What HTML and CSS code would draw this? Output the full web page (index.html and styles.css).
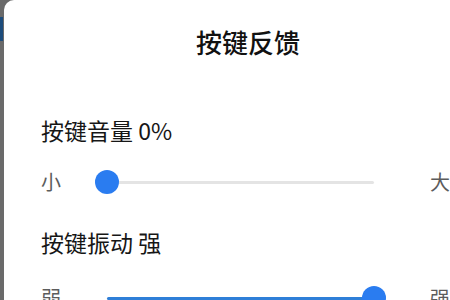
FILE: index.html
```html
<!DOCTYPE html>
<html lang="zh-CN">
<head>
<meta charset="utf-8">
<title>按键反馈</title>
<link rel="stylesheet" href="styles.css">
</head>
<body>
<div class="screen">
  <div class="backdrop"><div class="backdrop-blob"></div></div>
  <div class="dialog">
    <div class="title">按键反馈</div>
    <div class="heading heading-first">按键音量 0%</div>
    <div class="slider-row slider-row-first">
      <span class="side">小</span>
      <div class="slider">
        <div class="track"><div class="fill" style="width:0%"></div></div>
        <div class="thumb" style="left:0%"></div>
      </div>
      <span class="side side-right">大</span>
    </div>
    <div class="heading heading-second">按键振动 强</div>
    <div class="slider-row slider-row-second">
      <span class="side">弱</span>
      <div class="slider">
        <div class="track"><div class="fill" style="width:100%"></div></div>
        <div class="thumb" style="left:100%"></div>
      </div>
      <span class="side side-right">强</span>
    </div>
  </div>
</div>
</body>
</html>
```

FILE: styles.css
```css
html, body {
  margin: 0;
  padding: 0;
  width: 450px;
  height: 300px;
  overflow: hidden;
  background: #6a6a6a;
}
.screen {
  display: flex;
  width: 450px;
  height: 300px;
  overflow: hidden;
  font-family: "Noto Sans CJK SC", "Noto Sans", sans-serif;
}
.backdrop {
  position: relative;
  flex: 0 0 4px;
  background: #6a6a6a;
}
.backdrop-blob {
  position: absolute;
  left: 0;
  top: 17px;
  width: 3px;
  height: 24px;
  background: #1d4c7c;
}
.dialog {
  flex: 0 0 488px;
  box-sizing: border-box;
  background: #ffffff;
  border-top-left-radius: 10px;
  padding: 0 37px;
}
.title {
  padding-top: 29px;
  font-size: 26px;
  line-height: 26px;
  font-weight: 500;
  color: #111111;
  text-align: center;
}
.heading {
  font-size: 23px;
  line-height: 23px;
  color: #161616;
}
.heading-first { margin-top: 64px; }
.heading-second { margin-top: 37px; }
.slider-row {
  display: flex;
  align-items: center;
  height: 24px;
}
.slider-row-first { margin-top: 28px; }
.slider-row-second { margin-top: 32px; }
.side {
  flex: 0 0 20px;
  font-size: 20px;
  line-height: 20px;
  color: #5c5c5c;
}
.side-right { margin-left: 56px; }
.slider {
  position: relative;
  flex: 0 0 267px;
  margin-left: 46px;
  height: 24px;
  display: flex;
  align-items: center;
}
.track {
  width: 100%;
  height: 3px;
  background: #e4e4e4;
  border-radius: 2px;
}
.fill {
  height: 100%;
  background: #2f7fd8;
  border-radius: 2px;
}
.thumb {
  position: absolute;
  top: 0;
  width: 24px;
  height: 24px;
  margin-left: -12px;
  border-radius: 50%;
  background: #2a7cf0;
}
```
